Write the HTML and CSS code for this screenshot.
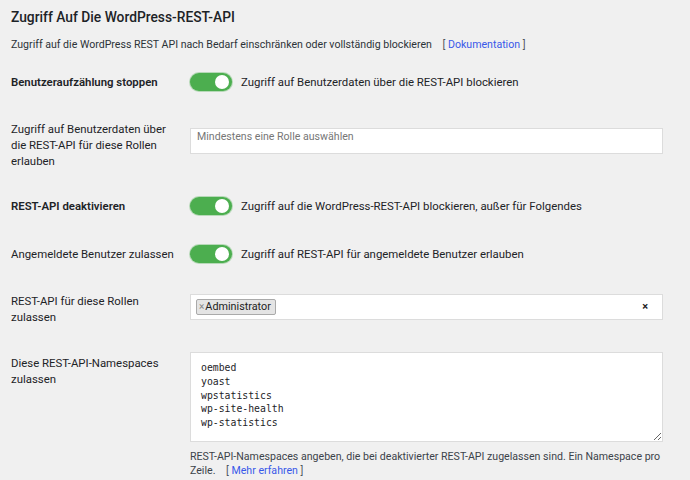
FILE: index.html
```html
<!DOCTYPE html>
<html lang="de">
<head>
    <meta charset="UTF-8">
    <meta name="viewport" content="width=device-width, initial-scale=1.0">
    <title>REST-API</title>
    <link rel="stylesheet" href="styles.css">
</head>
<body>
    <div class="panel">
        <h2>Zugriff Auf Die WordPress-REST-API</h2>
        <p class="intro">Zugriff auf die WordPress REST API nach Bedarf einschränken oder vollständig blockieren <span class="doc">[ <a href="#">Dokumentation</a> ]</span></p>

        <div class="settings">
            <div class="row row-toggle">
                <div class="label strong">Benutzeraufzählung stoppen</div>
                <div class="field">
                    <label class="switch"><input type="checkbox" checked><span class="slider"></span></label>
                    <span class="switch-text">Zugriff auf Benutzerdaten über die REST-API blockieren</span>
                </div>
            </div>

            <div class="row row-roles">
                <div class="label">Zugriff auf Benutzerdaten über die REST-API für diese Rollen erlauben</div>
                <div class="field">
                    <div class="select-box">
                        <span class="placeholder">Mindestens eine Rolle auswählen</span>
                    </div>
                </div>
            </div>

            <div class="row row-toggle after-roles">
                <div class="label strong">REST-API deaktivieren</div>
                <div class="field">
                    <label class="switch"><input type="checkbox" checked><span class="slider"></span></label>
                    <span class="switch-text">Zugriff auf die WordPress-REST-API blockieren, außer für Folgendes</span>
                </div>
            </div>

            <div class="row row-toggle">
                <div class="label">Angemeldete Benutzer zulassen</div>
                <div class="field">
                    <label class="switch"><input type="checkbox" checked><span class="slider"></span></label>
                    <span class="switch-text">Zugriff auf REST-API für angemeldete Benutzer erlauben</span>
                </div>
            </div>

            <div class="row row-select">
                <div class="label">REST-API für diese Rollen zulassen</div>
                <div class="field">
                    <div class="select-box filled">
                        <span class="chip"><span class="chip-x">×</span>Administrator</span>
                        <span class="clear">×</span>
                    </div>
                </div>
            </div>

            <div class="row row-area">
                <div class="label">Diese REST-API-Namespaces zulassen</div>
                <div class="field">
                    <textarea class="namespaces" rows="6">oembed
yoast
wpstatistics
wp-site-health
wp-statistics</textarea>
                    <p class="help">REST-API-Namespaces angeben, die bei deaktivierter REST-API zugelassen sind. Ein Namespace pro Zeile. <span class="doc">[ <a href="#">Mehr erfahren</a> ]</span></p>
                </div>
            </div>
        </div>
    </div>
</body>
</html>
```

FILE: styles.css
```css
*{
    margin: 0;
    padding: 0;
    box-sizing: border-box;
}

body{
    background-color: #f0f0f0;
    font-family: Roboto, "Liberation Sans", sans-serif;
    font-size: 11.4px;
    color: #1d2327;
}

.panel{
    padding: 7px 27px 0 11px;
}

.panel h2{
    font-size: 13.8px;
    font-weight: 500;
    line-height: 20px;
    color: #1d2327;
}

.intro{
    margin-top: 10px;
    font-size: 10.6px;
    line-height: 16px;
    color: #2c3338;
}

.doc{
    margin-left: 8px;
    color: #50575e;
}

.doc a{
    color: #3858e9;
    text-decoration: none;
}

.settings{
    margin-top: 20px;
}

.row{
    display: grid;
    grid-template-columns: 179px 473px;
    align-items: start;
    margin-top: 30px;
}

.row:first-child{
    margin-top: 0;
}

.row.after-roles{
    margin-top: 28px;
}

.label{
    line-height: 16px;
    padding-right: 10px;
}

.label.strong{
    font-weight: 600;
}

.row-toggle .label{
    padding-top: 1px;
}

.field{
    display: flex;
    flex-direction: column;
}

.row-toggle .field{
    flex-direction: row;
    align-items: center;
}

/* toggle */
.switch{
    position: relative;
    display: inline-block;
    width: 42px;
    height: 18px;
    flex-shrink: 0;
}

.switch input{
    display: none;
}

.slider{
    position: absolute;
    inset: 0;
    background-color: #4cae4f;
    border-radius: 9px;
    box-shadow: 0 0 0 1px rgba(76, 174, 79, 0.35);
}

.slider::after{
    content: "";
    position: absolute;
    top: 2px;
    right: 3px;
    width: 14px;
    height: 14px;
    border-radius: 50%;
    background-color: #fff;
}

.switch-text{
    margin-left: 9px;
    line-height: 18px;
}

/* selects */
.select-box{
    position: relative;
    height: 26px;
    background-color: #fff;
    border: 1px solid #dcdcdc;
    padding: 0 6px;
    display: flex;
    align-items: flex-start;
}

.row-roles .select-box{
    margin-top: 7px;
}

.placeholder{
    font-size: 10.6px;
    color: #767676;
    line-height: 14px;
    padding-top: 1px;
}

.select-box.filled{
    align-items: center;
    padding-left: 5px;
}

.row-select .field{
    padding-top: 1px;
}

.chip{
    display: inline-flex;
    align-items: center;
    height: 16px;
    padding: 0 4px 0 2px;
    background-color: #e4e4e4;
    border: 1px solid #aaa;
    border-radius: 2px;
    font-size: 10.8px;
    color: #222;
    line-height: 14px;
}

.chip-x{
    color: #888;
    font-size: 10px;
    margin-right: 1px;
}

.clear{
    position: absolute;
    right: 14px;
    top: 5px;
    font-size: 11px;
    font-weight: 700;
    color: #222;
}

/* namespaces */
.row-area{
    margin-top: 27px;
}

.row-area .label{
    padding-top: 3px;
}

.namespaces{
    display: block;
    width: 473px;
    height: 90px;
    background-color: #fff;
    border: 1px solid #dcdcdc;
    padding: 8px 10px;
    font-family: "DejaVu Sans Mono", monospace;
    font-size: 9.8px;
    line-height: 13.8px;
    color: #1d2327;
    resize: vertical;
    outline: none;
}

.help{
    margin-top: 8px;
    font-size: 10.6px;
    line-height: 14px;
    color: #3c434a;
}
```
